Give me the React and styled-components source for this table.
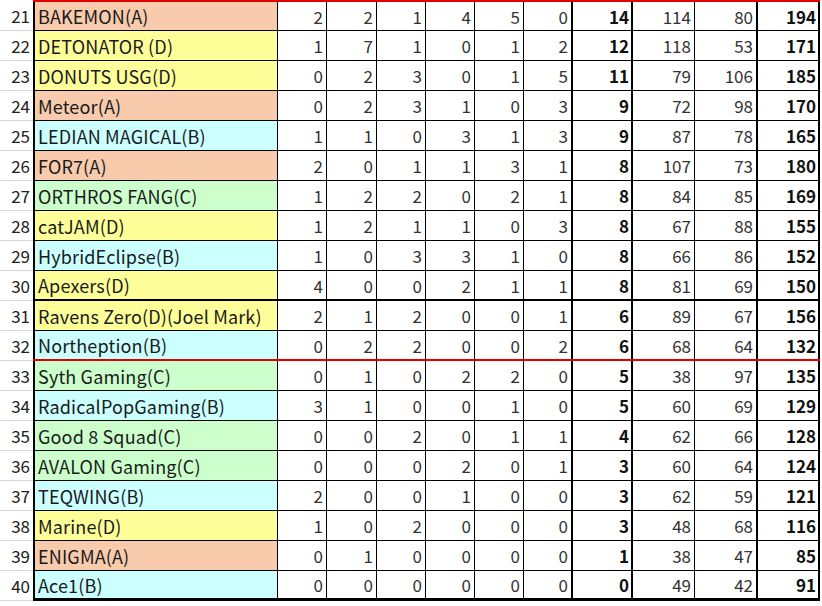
import React from 'react';
import styled, { createGlobalStyle } from 'styled-components';

const GlobalStyle = createGlobalStyle`
  html, body {
    margin: 0;
    padding: 0;
    background: #fff;
  }
  body {
    font-family: "Noto Sans CJK JP", "Noto Sans", sans-serif;
    font-size: 17px;
    color: #111;
  }
  * {
    box-sizing: border-box;
  }
`;

const teamColors = {
  A: '#f8cbad',
  B: '#ccffff',
  C: '#ccffcc',
  D: '#ffff99',
};

const edgeStyles = {
  normal: '1px solid #000',
  thick: '2px solid #000',
  red: '2px solid #e00000',
  end: '3px solid #000',
};

const Sheet = styled.div`
  width: 822px;
  display: flex;
  flex-direction: column;
`;

const Row = styled.div`
  display: grid;
  grid-template-columns: 33px 787px;
  height: ${(p) => (p.$first ? 31 : 30)}px;
`;

const RowNum = styled.div`
  display: flex;
  align-items: center;
  justify-content: flex-end;
  padding-right: 3px;
  border-bottom: 1px solid #d6d6d6;
  color: #222;
`;

const Data = styled.div`
  display: grid;
  grid-template-columns: 245px 49px 50px 49px 49px 49px 49px 60px 62px 63px 62px;
  border-top: ${(p) => (p.$first ? edgeStyles.red : 'none')};
  border-bottom: ${(p) => edgeStyles[p.$edge]};
`;

const NameCell = styled.div`
  display: flex;
  align-items: center;
  padding-left: 3px;
  background: ${(p) => teamColors[p.$team]};
  border-left: 2px solid #000;
  border-right: 1px solid #000;
  white-space: nowrap;
  overflow: hidden;
  font-size: 18px;
  letter-spacing: 0.15px;
  color: #1a1a1a;
`;

const ValueCell = styled.div`
  display: flex;
  align-items: center;
  justify-content: flex-end;
  padding-right: ${(p) => (p.$bold ? 2 : 3)}px;
  border-right: ${(p) => (p.$thick ? 2 : 1)}px solid #000;
  font-weight: ${(p) => (p.$bold ? 700 : 400)};
  color: ${(p) => (p.$bold ? '#111' : '#333')};
`;

const rows = [
  [21, 'BAKEMON(A)', 'A', [2, 2, 1, 4, 5, 0], 14, 114, 80, 194],
  [22, 'DETONATOR (D)', 'D', [1, 7, 1, 0, 1, 2], 12, 118, 53, 171],
  [23, 'DONUTS USG(D)', 'D', [0, 2, 3, 0, 1, 5], 11, 79, 106, 185],
  [24, 'Meteor(A)', 'A', [0, 2, 3, 1, 0, 3], 9, 72, 98, 170],
  [25, 'LEDIAN MAGICAL(B)', 'B', [1, 1, 0, 3, 1, 3], 9, 87, 78, 165],
  [26, 'FOR7(A)', 'A', [2, 0, 1, 1, 3, 1], 8, 107, 73, 180],
  [27, 'ORTHROS FANG(C)', 'C', [1, 2, 2, 0, 2, 1], 8, 84, 85, 169],
  [28, 'catJAM(D)', 'D', [1, 2, 1, 1, 0, 3], 8, 67, 88, 155],
  [29, 'HybridEclipse(B)', 'B', [1, 0, 3, 3, 1, 0], 8, 66, 86, 152],
  [30, 'Apexers(D)', 'D', [4, 0, 0, 2, 1, 1], 8, 81, 69, 150],
  [31, 'Ravens Zero(D)(Joel Mark)', 'D', [2, 1, 2, 0, 0, 1], 6, 89, 67, 156],
  [32, 'Northeption(B)', 'B', [0, 2, 2, 0, 0, 2], 6, 68, 64, 132],
  [33, 'Syth Gaming(C)', 'C', [0, 1, 0, 2, 2, 0], 5, 38, 97, 135],
  [34, 'RadicalPopGaming(B)', 'B', [3, 1, 0, 0, 1, 0], 5, 60, 69, 129],
  [35, 'Good 8 Squad(C)', 'C', [0, 0, 2, 0, 1, 1], 4, 62, 66, 128],
  [36, 'AVALON Gaming(C)', 'C', [0, 0, 0, 2, 0, 1], 3, 60, 64, 124],
  [37, 'TEQWING(B)', 'B', [2, 0, 0, 1, 0, 0], 3, 62, 59, 121],
  [38, 'Marine(D)', 'D', [1, 0, 2, 0, 0, 0], 3, 48, 68, 116],
  [39, 'ENIGMA(A)', 'A', [0, 1, 0, 0, 0, 0], 1, 38, 47, 85],
  [40, 'Ace1(B)', 'B', [0, 0, 0, 0, 0, 0], 0, 49, 42, 91],
];

function edgeFor(num) {
  if (num === 30) return 'thick';
  if (num === 32) return 'red';
  if (num === 40) return 'end';
  return 'normal';
}

export default function App() {
  return (
    <>
      <GlobalStyle />
      <Sheet>
        {rows.map(([num, name, team, games, wins, plus, minus, total], i) => (
          <Row key={num} $first={i === 0}>
            <RowNum>{num}</RowNum>
            <Data $first={i === 0} $edge={edgeFor(num)}>
              <NameCell $team={team}>{name}</NameCell>
              {games.map((g, j) => (
                <ValueCell key={j} $thick={j === 5}>
                  {g}
                </ValueCell>
              ))}
              <ValueCell $bold $thick>
                {wins}
              </ValueCell>
              <ValueCell>{plus}</ValueCell>
              <ValueCell $thick>{minus}</ValueCell>
              <ValueCell $bold $thick>
                {total}
              </ValueCell>
            </Data>
          </Row>
        ))}
      </Sheet>
    </>
  );
}
